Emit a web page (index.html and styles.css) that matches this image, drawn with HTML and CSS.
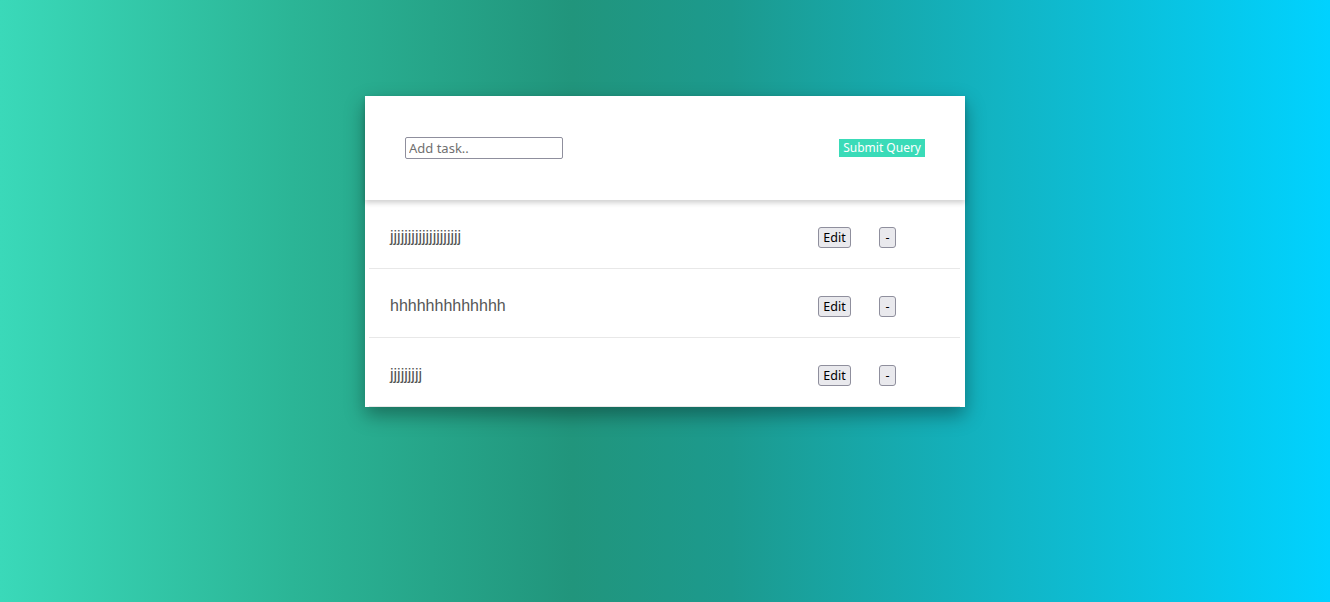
FILE: index.html
```html
<!DOCTYPE html>
<html>
<head>
<meta charset="utf-8">
<link rel="stylesheet" href="styles.css">
</head>
<body>
<div class="card">
  <form class="header">
    <input class="task-input" type="text" placeholder="Add task..">
    <input class="submit" type="submit" value="Submit Query">
  </form>
  <ul class="list">
    <li class="row"><span class="text">jjjjjjjjjjjjjjjjjjjj</span><button class="btn">Edit</button><button class="btn minus">-</button></li>
    <li class="row"><span class="text">hhhhhhhhhhhhh</span><button class="btn">Edit</button><button class="btn minus">-</button></li>
    <li class="row"><span class="text">jjjjjjjjj</span><button class="btn">Edit</button><button class="btn minus">-</button></li>
  </ul>
</div>
</body>
</html>
```
FILE: styles.css
```css
html, body {
  margin: 0;
  height: 100%;
}
body {
  background: linear-gradient(to right, #3ad9b9 0%, #2bb596 22%, #21957c 43%, #1c9a8e 55%, #12b4c3 75%, #00d2ff 100%);
  font-family: "Liberation Sans", Arial, sans-serif;
  padding-top: 96px;
  box-sizing: border-box;
}
.card {
  width: 600px;
  margin: 0 auto;
  background: #fff;
  box-shadow: 0 8px 18px rgba(0, 0, 0, 0.35);
}
.header {
  height: 104px;
  margin: 0;
  padding: 0 40px;
  display: flex;
  align-items: center;
  justify-content: space-between;
  box-shadow: 0 3px 5px rgba(0, 0, 0, 0.18);
  position: relative;
  box-sizing: border-box;
}
.task-input {
  width: 158px;
  height: 22px;
  box-sizing: border-box;
  border: 1px solid #8f8f9d;
  border-radius: 2px;
  padding: 0 3px;
  font-family: "Noto Sans", "DejaVu Sans", sans-serif;
  font-size: 13px;
  color: #333;
  outline: none;
}
.task-input::placeholder {
  color: #707070;
}
.submit {
  height: 18px;
  padding: 0 4px;
  border: none;
  background: #3adbb8;
  color: #fff;
  font-family: "Noto Sans", "DejaVu Sans", sans-serif;
  font-size: 12px;
  line-height: 18px;
}
.list {
  list-style: none;
  margin: 0;
  padding: 0;
}
.row {
  display: flex;
  align-items: center;
  height: 69px;
  box-sizing: border-box;
  padding: 6px 64px 0 21px;
  margin: 0 5px 0 4px;
  border-bottom: 1px solid #e8e8e8;
}
.text {
  flex: 1;
  font-size: 16px;
  color: #555;
}
.btn {
  height: 21px;
  box-sizing: border-box;
  padding: 0 3px;
  border: 1px solid #8f8f9d;
  border-radius: 3px;
  background: #e9e9ed;
  color: #000;
  font-family: "Noto Sans", "DejaVu Sans", sans-serif;
  font-size: 12.5px;
  line-height: 19px;
  width: 33px;
}
.minus {
  width: 17px;
  margin-left: 28px;
  padding: 0;
}
```
